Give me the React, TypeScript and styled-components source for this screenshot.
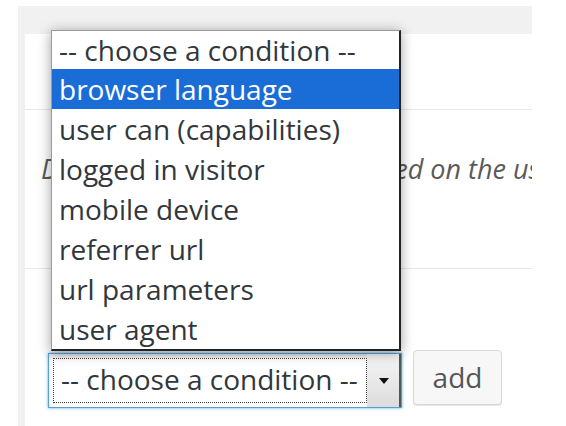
import React from "react";
import styled, { createGlobalStyle } from "styled-components";

const Global = createGlobalStyle`
  html, body { margin: 0; padding: 0; background: #fff; }
  body { font-family: "Open Sans", "Liberation Sans", sans-serif; width: 566px; height: 426px; overflow: hidden; }
`;

const Wrap = styled.div`
  margin: 6px 0 0 18px;
  width: 507px;
  height: 392px;
  padding: 28px 0 0 7px;
  background: #f1f1f1;
`;

const Panel = styled.div`
  position: relative;
  height: 100%;
  background: #fff;
`;

const Section = styled.div<{ $h: number; $line?: boolean }>`
  height: ${(p) => p.$h}px;
  border-bottom: ${(p) => (p.$line ? "1px solid #e8e8e8" : "none")};
  box-sizing: border-box;
  overflow: hidden;
`;

const Description = styled.p`
  margin: 0;
  padding: 41px 0 0 16px;
  font-style: italic;
  font-size: 27px;
  line-height: 36px;
  color: #5a5a5a;
  white-space: nowrap;
`;

const AddRow = styled.div`
  display: flex;
  align-items: flex-start;
  padding: 81px 0 0 23px;
`;

const Select = styled.div`
  margin-top: 3px;
  width: 354px;
  height: 55px;
  box-sizing: border-box;
  display: flex;
  border: 1px solid #5b9dd9;
  box-shadow: 0 0 3px rgba(30, 140, 190, 0.7), inset 0 3px 4px rgba(0, 0, 0, 0.12);
  background: #fff;
`;

const FocusRing = styled.div`
  flex: 1;
  margin: 4px 0 4px 4px;
  border: 1px dotted #444;
  display: flex;
  align-items: center;
  padding-left: 7px;
  padding-bottom: 3px;
  font-size: 28px;
  color: #32373c;
  white-space: nowrap;
`;

const ArrowBox = styled.div`
  width: 32px;
  display: flex;
  align-items: center;
  justify-content: center;
  background: linear-gradient(to bottom, #f6f6f6, #dcdcdc);
  border-right: 2px solid #555;
`;

const Arrow = styled.span`
  width: 0;
  height: 0;
  border-left: 5px solid transparent;
  border-right: 5px solid transparent;
  border-top: 6px solid #111;
  margin-left: 2px;
`;

const Button = styled.button`
  margin-left: 11px;
  width: 89px;
  height: 55px;
  border: 1px solid #d8d8d8;
  border-radius: 4px;
  background: #f7f7f7;
  box-shadow: 0 1px 0 #e6e6e6;
  font-family: "Open Sans", "Liberation Sans", sans-serif;
  font-size: 28px;
  color: #555;
  padding: 0 0 2px;
`;

const Dropdown = styled.ul`
  position: absolute;
  left: 26px;
  top: -4px;
  width: 350px;
  margin: 0;
  padding: 0;
  list-style: none;
  box-sizing: border-box;
  background: #fff;
  border: 1px solid #9a9a9a;
  border-right: 2px solid #222;
  border-bottom: 2px solid #222;
  box-shadow: 0 2px 12px rgba(0, 0, 0, 0.38);
`;

const Option = styled.li<{ $selected?: boolean; $first?: boolean }>`
  height: ${(p) => (p.$first ? 38 : 40)}px;
  line-height: ${(p) => (p.$first ? 38 : 40)}px;
  padding-left: 7px;
  font-size: 28px;
  white-space: nowrap;
  color: ${(p) => (p.$selected ? "#fff" : "#32373c")};
  background: ${(p) => (p.$selected ? "#1a6dd6" : "transparent")};
`;

const options = [
  "-- choose a condition --",
  "browser language",
  "user can (capabilities)",
  "logged in visitor",
  "mobile device",
  "referrer url",
  "url parameters",
  "user agent",
];

export default function App() {
  return (
    <>
      <Global />
      <Wrap>
        <Panel>
          <Section $h={76} $line />
          <Section $h={159} $line>
            <Description>Display ad only to visitors based on the user</Description>
          </Section>
          <AddRow>
            <Select>
              <FocusRing>-- choose a condition --</FocusRing>
              <ArrowBox>
                <Arrow />
              </ArrowBox>
            </Select>
            <Button>add</Button>
          </AddRow>
          <Dropdown>
            {options.map((o, i) => (
              <Option key={o} $first={i === 0} $selected={i === 1}>
                {o}
              </Option>
            ))}
          </Dropdown>
        </Panel>
      </Wrap>
    </>
  );
}
